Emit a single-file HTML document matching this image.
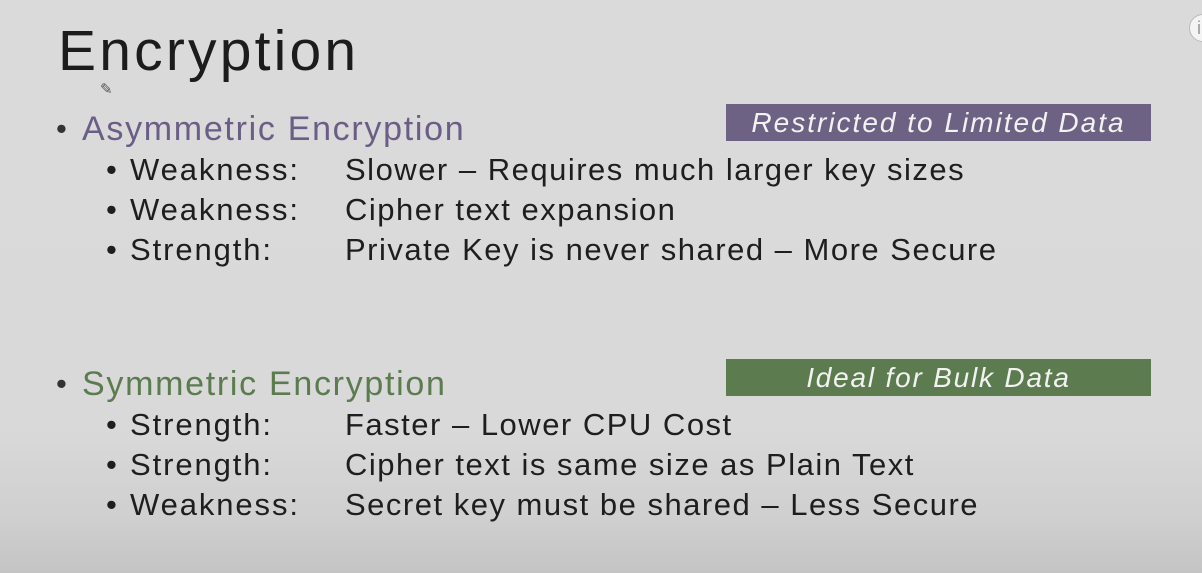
<!DOCTYPE html>
<html><head><style>
body{margin:0;width:1202px;height:573px;overflow:hidden;background:linear-gradient(#dadada 0,#d9d9d9 430px,#cfcfcf 520px,#c4c4c4 573px);font-family:"Liberation Sans",sans-serif;position:relative;color:#1e1e1e}
div{position:absolute;line-height:1;white-space:nowrap}
.t{font-size:57px;left:58px;top:23px;color:#1c1c1c;letter-spacing:3.2px}
.h{font-size:34px;letter-spacing:1.7px}
.s{font-size:31px;letter-spacing:1.5px}
.l{letter-spacing:1.9px}
.b{font-size:31px}
.box{left:726px;width:425px;height:37px;color:#f2f2f2;font-style:italic;font-size:28px;text-align:center;line-height:37px}
</style></head><body>
<div class="t">Encryption</div>
<div style="left:100px;top:82px;font-size:15px;color:#555">✎</div>
<div class="b" style="left:56px;top:113px;color:#333">•</div>
<div class="h" style="left:82px;top:112px;color:#6b5e86">Asymmetric Encryption</div>
<div class="box" style="top:104px;background:#6e6284;letter-spacing:2px">Restricted to Limited Data</div>
<div class="b" style="left:106px;top:154px">•</div><div class="s l" style="left:130px;top:154px">Weakness:</div><div class="s" style="left:345px;top:154px">Slower – Requires much larger key sizes</div>
<div class="b" style="left:106px;top:194px">•</div><div class="s l" style="left:130px;top:194px">Weakness:</div><div class="s" style="left:345px;top:194px">Cipher text expansion</div>
<div class="b" style="left:106px;top:234px">•</div><div class="s l" style="left:130px;top:234px">Strength:</div><div class="s" style="left:345px;top:234px">Private Key is never shared – More Secure</div>
<div class="b" style="left:56px;top:368px;color:#333">•</div>
<div class="h" style="left:82px;top:367px;color:#5b7c4f">Symmetric Encryption</div>
<div class="box" style="top:359px;background:#5c7c4f;letter-spacing:1.8px">Ideal for Bulk Data</div>
<div class="b" style="left:106px;top:409px">•</div><div class="s l" style="left:130px;top:409px">Strength:</div><div class="s" style="left:345px;top:409px">Faster – Lower CPU Cost</div>
<div class="b" style="left:106px;top:449px">•</div><div class="s l" style="left:130px;top:449px">Strength:</div><div class="s" style="left:345px;top:449px">Cipher text is same size as Plain Text</div>
<div class="b" style="left:106px;top:489px">•</div><div class="s l" style="left:130px;top:489px">Weakness:</div><div class="s" style="left:345px;top:489px">Secret key must be shared – Less Secure</div>
<div style="left:1189px;top:14px;width:26px;height:26px;border-radius:50%;background:#f4f4f4;border:1px solid #bbb;color:#999;font-size:18px;line-height:26px;text-indent:7px">i</div>
</body></html>
